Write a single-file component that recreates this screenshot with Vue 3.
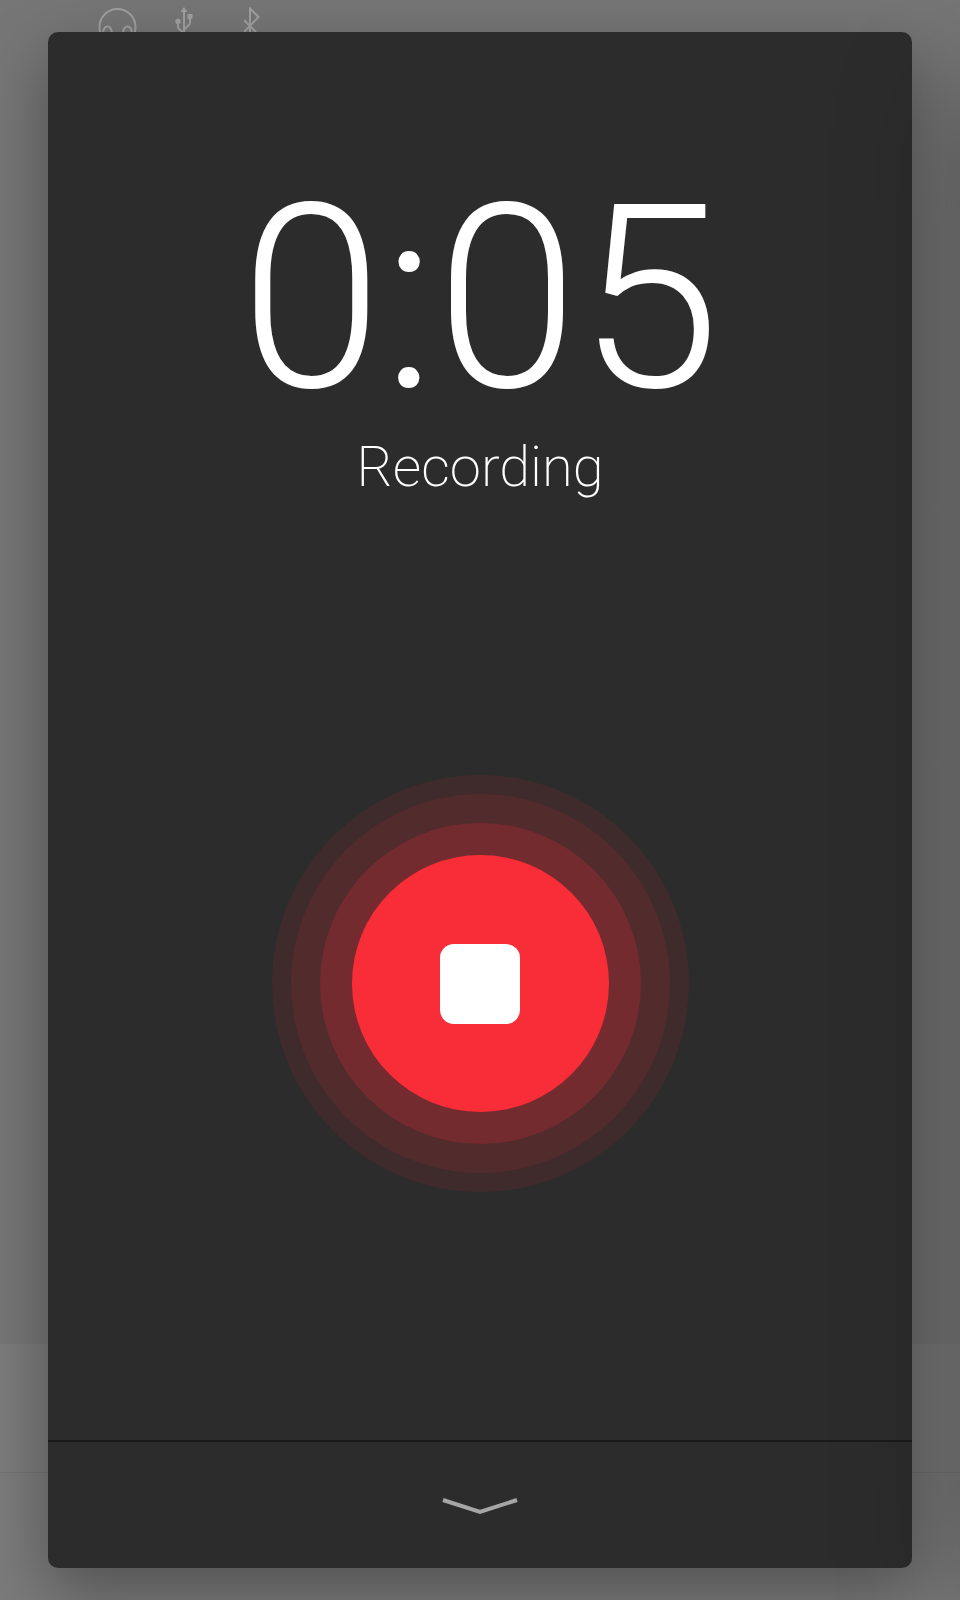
<script setup>
import { ref, computed } from 'vue'

const seconds = ref(5)
const recording = ref(true)

const time = computed(() => {
  const minutes = Math.floor(seconds.value / 60)
  return `${minutes}:${String(seconds.value % 60).padStart(2, '0')}`
})
</script>

<template>
  <div class="screen">
    <div class="backdrop" aria-hidden="true">
      <div class="status">
        <svg width="40" height="40" viewBox="0 0 40 40">
          <path d="M4.500 31C2.500 28 1.500 25 1.500 20a18 18 0 0 1 36 0c0 5-1 8-3 11" />
          <path d="M5 28c0-5 1.500-8.500 4.500-8.500s4 2.500 4.500 6M34 28c0-5-1.500-8.500-4.500-8.500s-4 2.500-4.500 6" />
        </svg>
        <svg width="20" height="40" viewBox="0 0 20 40">
          <path d="M10 3v30M4 15v5c0 3 5 3 5 7M16 9v7c0 3-6 4-6 8" />
          <path class="solid" d="M10 0l3.500 5h-7zM13.500 7h5v5h-5z" />
          <circle class="solid" cx="4" cy="14.500" r="2.700" />
        </svg>
        <svg width="18" height="40" viewBox="0 0 18 40">
          <path d="M0 13l12 12M0 25l14.500-15L6 1.500V33" />
        </svg>
      </div>
      <div class="content"></div>
      <div class="tabs"></div>
      <div class="nav"></div>
    </div>

    <main class="card">
      <section class="recorder">
        <time class="clock">{{ time }}</time>
        <p class="state">{{ recording ? 'Recording' : 'Stopped' }}</p>
        <div class="ring outer">
          <div class="ring middle">
            <div class="ring inner">
              <button class="stop" type="button" aria-label="Stop" @click="recording = false">
                <span class="square"></span>
              </button>
            </div>
          </div>
        </div>
      </section>
      <button class="collapse" type="button" aria-label="Collapse">
        <svg width="80" height="20" viewBox="0 0 80 20">
          <path d="M3 5l37 12L77 5" />
        </svg>
      </button>
    </main>
  </div>
</template>

<style>
body {
  margin: 0;
}
</style>

<style scoped>
.screen {
  position: relative;
  display: flex;
  box-sizing: border-box;
  min-height: 100vh;
  padding: 32px 5%;
  overflow: hidden;
  font-family: Roboto, "Liberation Sans", sans-serif;
  color: #fff;
}

/* Shade that falls in from the right edge of the screen */
.screen::after {
  content: "";
  position: absolute;
  top: 90px;
  bottom: 0;
  left: 100%;
  width: 200px;
  box-shadow: 0 0 120px rgba(0, 0, 0, 0.34);
  pointer-events: none;
}

.backdrop {
  position: absolute;
  inset: 0;
  display: flex;
  flex-direction: column;
  background: #767676;
}

.status {
  display: flex;
  gap: 36px;
  height: 40px;
  padding: 7px 0 0 98px;
}

.status svg:last-child {
  margin-left: 14px;
}

.status path {
  fill: none;
  stroke: #a0a0a0;
  stroke-width: 2;
}

.status .solid {
  fill: #a0a0a0;
  stroke: none;
}

.content {
  flex: 1;
}

.tabs {
  height: 128px;
  background: #7b7b7b;
  border-bottom: 1px solid #727272;
}

.nav {
  height: 127px;
  background: #7b7b7b;
}

.card {
  position: relative;
  display: flex;
  flex: 1;
  flex-direction: column;
  background: #2c2c2c;
  border-radius: 10px;
  box-shadow: 0 24px 64px rgba(0, 0, 0, 0.34);
}

.recorder {
  display: flex;
  flex: 1;
  flex-direction: column;
  align-items: center;
}

.clock {
  margin-top: 140px;
  font-size: 256px;
  font-weight: 300;
  line-height: 256px;
}

.state {
  margin: 7px 0 0;
  font-size: 56px;
  font-weight: 200;
  line-height: 64px;
}

.ring {
  display: grid;
  place-items: center;
  border-radius: 50%;
}

.outer {
  width: 417px;
  height: 417px;
  margin-top: 276px;
  background: #3f2b2c;
}

.middle {
  width: 379px;
  height: 379px;
  background: #522b2c;
}

.inner {
  width: 321px;
  height: 321px;
  background: #742b2f;
}

.stop {
  display: grid;
  place-items: center;
  width: 257px;
  height: 257px;
  padding: 0;
  border: 0;
  border-radius: 50%;
  background: #f82d38;
  cursor: pointer;
}

.square {
  width: 80px;
  height: 80px;
  border-radius: 14px;
  background: #fff;
}

.collapse {
  display: flex;
  align-items: center;
  justify-content: center;
  height: 128px;
  padding: 0;
  border: 0;
  border-top: 2px solid #1a1a1a;
  border-radius: 0 0 10px 10px;
  background: transparent;
  cursor: pointer;
}

.collapse path {
  fill: none;
  stroke: #a6a6a6;
  stroke-width: 4;
}
</style>
